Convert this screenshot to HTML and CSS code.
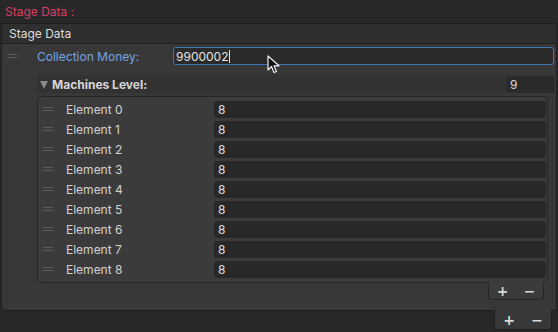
FILE: index.html
```html
<!DOCTYPE html>
<html>
<head>
<meta charset="utf-8">
<link rel="stylesheet" href="styles.css">
</head>
<body>
<div class="title">Stage Data :</div>
<div class="panel">
  <div class="panel-head">Stage Data</div>
  <div class="panel-body">
    <div class="prop-row">
      <span class="handle"></span>
      <span class="prop-label">Collection Money:</span>
      <div class="input active"><span class="val">9900002</span><span class="caret"></span></div>
    </div>
    <div class="list-head">
      <span class="tri"></span>
      <span class="list-title">Machines Level:</span>
      <div class="size-field">9</div>
    </div>
    <div class="list">
      <div class="el"><span class="handle"></span><span class="el-label">Element 0</span><div class="field">8</div></div>
      <div class="el"><span class="handle"></span><span class="el-label">Element 1</span><div class="field">8</div></div>
      <div class="el"><span class="handle"></span><span class="el-label">Element 2</span><div class="field">8</div></div>
      <div class="el"><span class="handle"></span><span class="el-label">Element 3</span><div class="field">8</div></div>
      <div class="el"><span class="handle"></span><span class="el-label">Element 4</span><div class="field">8</div></div>
      <div class="el"><span class="handle"></span><span class="el-label">Element 5</span><div class="field">8</div></div>
      <div class="el"><span class="handle"></span><span class="el-label">Element 6</span><div class="field">8</div></div>
      <div class="el"><span class="handle"></span><span class="el-label">Element 7</span><div class="field">8</div></div>
      <div class="el"><span class="handle"></span><span class="el-label">Element 8</span><div class="field">8</div></div>
    </div>
    <div class="list-foot-wrap">
      <div class="list-foot"><span class="pm">+</span><span class="pm">−</span></div>
    </div>
  </div>
</div>
<div class="outer-foot-wrap">
  <div class="outer-foot"><span class="pm">+</span><span class="pm">−</span></div>
</div>
<svg class="cursor" width="14" height="20" viewBox="0 0 14 20">
  <path d="M1 1 L1 15 L4.5 11.5 L7 17.5 L9.5 16.5 L7 10.8 L12 10.8 Z" fill="#111" stroke="#eee" stroke-width="1.2" stroke-linejoin="round"/>
</svg>
</body>
</html>
```
FILE: styles.css
```css
html, body {
  margin: 0;
  padding: 0;
}
body {
  width: 558px;
  height: 332px;
  background: #282828;
  font-family: Inter, "Noto Sans", sans-serif;
  font-size: 12px;
  color: #d2d2d2;
  position: relative;
  overflow: hidden;
}
.title {
  height: 23px;
  line-height: 23px;
  padding-left: 5px;
  color: #d63f69;
  font-size: 12px;
}
.panel {
  margin: 0 1px 0 1px;
  border: 1px solid #1f1f1f;
  border-radius: 0 0 4px 4px;
  background: #383838;
}
.panel-head {
  height: 19px;
  line-height: 19px;
  padding-left: 7px;
  background: #2f2f2f;
  border-bottom: 1px solid #1f1f1f;
  color: #dcdcdc;
  font-size: 12px;
}
.panel-body {
  padding: 3px 1px 10px 0;
}
.handle {
  display: inline-block;
  width: 10px;
  height: 4px;
  border-top: 1px solid #5a5a5a;
  border-bottom: 1px solid #5a5a5a;
  box-sizing: border-box;
  flex: none;
}
.prop-row {
  display: flex;
  align-items: center;
  height: 18px;
  margin-bottom: 10px;
}
.prop-row .handle {
  margin-left: 5px;
}
.prop-label {
  margin-left: 20px;
  width: 136px;
  color: #76a3e4;
  font-size: 12px;
}
.input {
  flex: 1;
  height: 18px;
  box-sizing: border-box;
  border: 1px solid #3b75b7;
  border-radius: 3px;
  background: #2a2a2a;
  display: flex;
  align-items: center;
  padding-left: 2px;
  margin-right: 1px;
  color: #e4e4e4;
}
.caret {
  display: inline-block;
  width: 1px;
  height: 13px;
  background: #e4e4e4;
  margin-left: 1px;
}
.list-head {
  display: flex;
  align-items: center;
  height: 18px;
  margin-left: 35px;
  background: #323232;
  border-radius: 3px 3px 0 0;
  padding: 0 1px 0 3px;
}
.tri {
  width: 0;
  height: 0;
  border-left: 4.5px solid transparent;
  border-right: 4.5px solid transparent;
  border-top: 8px solid #8a8a8a;
  margin-right: 4px;
  margin-top: 1px;
}
.list-title {
  font-weight: 700;
  color: #d6d6d6;
  flex: 1;
}
.size-field {
  width: 47px;
  height: 17px;
  line-height: 17px;
  background: #2a2a2a;
  border-radius: 3px;
  padding-left: 3px;
  box-sizing: border-box;
  color: #dcdcdc;
}
.list {
  margin: 3px 7px 0 35px;
  border: 1px solid #262626;
  border-radius: 4px;
  background: #3b3b3b;
  padding: 2px 1px 3px 0;
}
.el {
  display: flex;
  align-items: center;
  height: 20px;
}
.el .handle {
  margin-left: 5px;
}
.el-label {
  margin-left: 13px;
  width: 148px;
  color: #d2d2d2;
}
.field {
  flex: 1;
  height: 17px;
  line-height: 17px;
  background: #282828;
  border-radius: 3px;
  padding-left: 4px;
  color: #e0e0e0;
}
.list-foot-wrap {
  display: flex;
  justify-content: flex-end;
  padding-right: 11px;
}
.list-foot {
  width: 56px;
  height: 18px;
  box-sizing: border-box;
  margin-top: -1px;
  border: 1px solid #262626;
  border-top: none;
  border-radius: 0 0 4px 4px;
  background: #3b3b3b;
  display: flex;
  justify-content: space-around;
  align-items: center;
}
.pm {
  font-family: "DejaVu Sans", sans-serif;
  font-weight: 700;
  font-size: 14px;
  color: #d8d8d8;
  line-height: 14px;
}
.outer-foot-wrap {
  display: flex;
  justify-content: flex-end;
  padding-right: 6px;
}
.outer-foot {
  width: 58px;
  height: 20px;
  box-sizing: border-box;
  margin-top: -1px;
  border: 1px solid #1f1f1f;
  border-top: none;
  border-radius: 0 0 4px 4px;
  background: #383838;
  display: flex;
  justify-content: space-around;
  align-items: center;
}
.cursor {
  position: absolute;
  left: 267px;
  top: 55px;
}
```
